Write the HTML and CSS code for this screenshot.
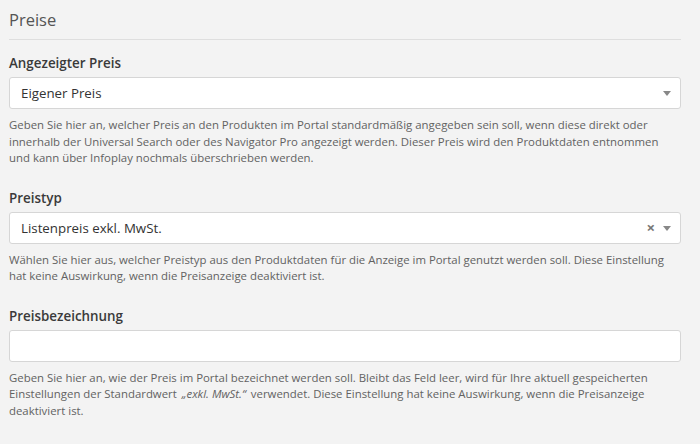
FILE: index.html
```html
<!DOCTYPE html>
<html lang="de">
<head>
<meta charset="utf-8">
<link rel="stylesheet" href="styles.css">
</head>
<body>
<div class="panel">
  <h2 class="title">Preise</h2>
  <div class="field">
    <label class="label">Angezeigter Preis</label>
    <div class="select">
      <span class="value">Eigener Preis</span>
      <span class="arrow"></span>
    </div>
    <p class="help">Geben Sie hier an, welcher Preis an den Produkten im Portal standardmäßig angegeben sein soll, wenn diese direkt oder innerhalb der Universal Search oder des Navigator Pro angezeigt werden. Dieser Preis wird den Produktdaten entnommen und kann über Infoplay nochmals überschrieben werden.</p>
  </div>
  <div class="field">
    <label class="label">Preistyp</label>
    <div class="select">
      <span class="value">Listenpreis exkl. MwSt.</span>
      <span class="clear">×</span>
      <span class="arrow"></span>
    </div>
    <p class="help">Wählen Sie hier aus, welcher Preistyp aus den Produktdaten für die Anzeige im Portal genutzt werden soll. Diese Einstellung hat keine Auswirkung, wenn die Preisanzeige deaktiviert ist.</p>
  </div>
  <div class="field">
    <label class="label">Preisbezeichnung</label>
    <div class="input"></div>
    <p class="help">Geben Sie hier an, wie der Preis im Portal bezeichnet werden soll. Bleibt das Feld leer, wird für Ihre aktuell gespeicherten Einstellungen der Standardwert <em>„exkl. MwSt.“</em> verwendet. Diese Einstellung hat keine Auswirkung, wenn die Preisanzeige deaktiviert ist.</p>
  </div>
</div>
</body>
</html>
```
FILE: styles.css
```css
html, body {
  margin: 0;
  padding: 0;
  background: #f3f3f3;
}
body {
  font-family: "Open Sans", "Liberation Sans", sans-serif;
  color: #555;
}
.panel {
  padding: 0 19px 0 9px;
}
.title {
  margin: 0;
  padding-top: 8px;
  font-size: 16.5px;
  font-weight: 400;
  line-height: 23px;
  color: #555;
  padding-bottom: 8px;
  border-bottom: 1px solid #dedede;
}
.field {
  margin-top: 14px;
}
.field + .field {
  margin-top: 22px;
}
.label {
  display: block;
  font-size: 13.4px;
  font-weight: 600;
  line-height: 18px;
  color: #3a3a3a;
  margin-bottom: 5px;
}
.select, .input {
  box-sizing: border-box;
  height: 32px;
  background: #fff;
  border: 1px solid #d6d6d6;
  border-radius: 3px;
  display: flex;
  align-items: center;
  padding: 0 9px 0 11px;
}
.value {
  flex: 1;
  font-size: 13.3px;
  color: #333;
}
.arrow {
  width: 0;
  height: 0;
  border-left: 4px solid transparent;
  border-right: 4px solid transparent;
  border-top: 5px solid #888;
  margin-top: 1px;
}
.clear {
  font-size: 15px;
  font-weight: 700;
  color: #777;
  margin-right: 8px;
  line-height: 1;
}
.help {
  margin: 8px 0 0;
  font-size: 11.4px;
  line-height: 16.5px;
  color: #626262;
}
.help em {
  font-style: italic;
  margin: 0 2px;
}
```
